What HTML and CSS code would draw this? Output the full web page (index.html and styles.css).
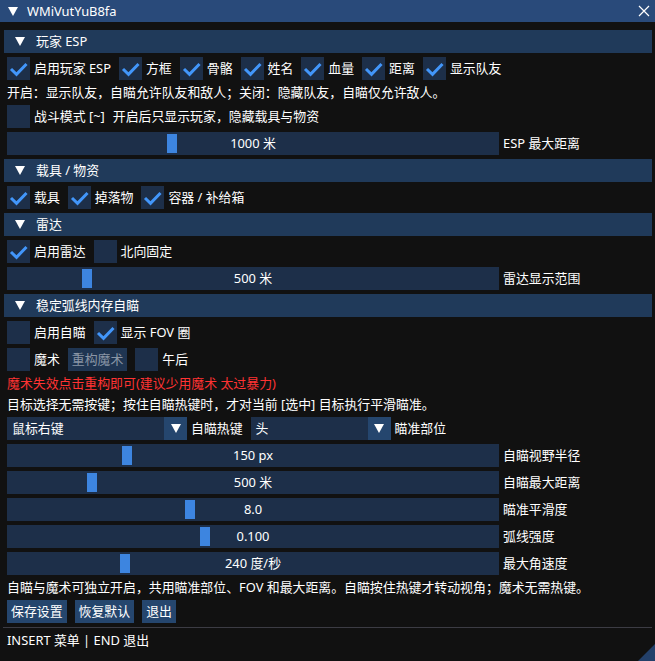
FILE: index.html
```html
<!DOCTYPE html>
<html lang="zh-CN">
<head>
<meta charset="utf-8">
<title>WMiVutYuB8fa</title>
<link rel="stylesheet" href="styles.css">
</head>
<body>
<div class="window">
  <div class="titlebar">
    <span class="tri title-tri"></span>
    <span class="title">WMiVutYuB8fa</span>
    <svg class="close" width="12" height="12" viewBox="0 0 12 12"><path d="M1 1 L11 11 M11 1 L1 11" stroke="#fff" stroke-width="1.2" fill="none"/></svg>
  </div>
  <div class="content">
    <div class="header"><span class="tri"></span><span class="htext">玩家 ESP</span></div>
    <div class="row">
      <div class="cb"><span class="box on"><svg viewBox="0 0 23 23"><path d="M4 12 L9.5 17.3 L19.5 7"/></svg></span><span class="lbl">启用玩家 ESP</span></div>
      <div class="cb"><span class="box on"><svg viewBox="0 0 23 23"><path d="M4 12 L9.5 17.3 L19.5 7"/></svg></span><span class="lbl">方框</span></div>
      <div class="cb"><span class="box on"><svg viewBox="0 0 23 23"><path d="M4 12 L9.5 17.3 L19.5 7"/></svg></span><span class="lbl">骨骼</span></div>
      <div class="cb"><span class="box on"><svg viewBox="0 0 23 23"><path d="M4 12 L9.5 17.3 L19.5 7"/></svg></span><span class="lbl">姓名</span></div>
      <div class="cb"><span class="box on"><svg viewBox="0 0 23 23"><path d="M4 12 L9.5 17.3 L19.5 7"/></svg></span><span class="lbl">血量</span></div>
      <div class="cb"><span class="box on"><svg viewBox="0 0 23 23"><path d="M4 12 L9.5 17.3 L19.5 7"/></svg></span><span class="lbl">距离</span></div>
      <div class="cb"><span class="box on"><svg viewBox="0 0 23 23"><path d="M4 12 L9.5 17.3 L19.5 7"/></svg></span><span class="lbl">显示队友</span></div>
    </div>
    <div class="text">开启：显示队友，自瞄允许队友和敌人；关闭：隐藏队友，自瞄仅允许敌人。</div>
    <div class="row">
      <div class="cb"><span class="box"></span><span class="lbl">战斗模式 [~]</span></div>
      <span class="lbl">开启后只显示玩家，隐藏载具与物资</span>
    </div>
    <div class="srow"><div class="slider"><span class="grab" style="left:160px"></span><span class="sval">1000 米</span></div><span class="lbl">ESP 最大距离</span></div>

    <div class="header"><span class="tri"></span><span class="htext">载具 / 物资</span></div>
    <div class="row">
      <div class="cb"><span class="box on"><svg viewBox="0 0 23 23"><path d="M4 12 L9.5 17.3 L19.5 7"/></svg></span><span class="lbl">载具</span></div>
      <div class="cb"><span class="box on"><svg viewBox="0 0 23 23"><path d="M4 12 L9.5 17.3 L19.5 7"/></svg></span><span class="lbl">掉落物</span></div>
      <div class="cb"><span class="box on"><svg viewBox="0 0 23 23"><path d="M4 12 L9.5 17.3 L19.5 7"/></svg></span><span class="lbl">容器 / 补给箱</span></div>
    </div>

    <div class="header"><span class="tri"></span><span class="htext">雷达</span></div>
    <div class="row">
      <div class="cb"><span class="box on"><svg viewBox="0 0 23 23"><path d="M4 12 L9.5 17.3 L19.5 7"/></svg></span><span class="lbl">启用雷达</span></div>
      <div class="cb"><span class="box"></span><span class="lbl">北向固定</span></div>
    </div>
    <div class="srow"><div class="slider"><span class="grab" style="left:75px"></span><span class="sval">500 米</span></div><span class="lbl">雷达显示范围</span></div>

    <div class="header"><span class="tri"></span><span class="htext">稳定弧线内存自瞄</span></div>
    <div class="row">
      <div class="cb"><span class="box"></span><span class="lbl">启用自瞄</span></div>
      <div class="cb"><span class="box on"><svg viewBox="0 0 23 23"><path d="M4 12 L9.5 17.3 L19.5 7"/></svg></span><span class="lbl">显示 FOV 圈</span></div>
    </div>
    <div class="row">
      <div class="cb"><span class="box"></span><span class="lbl">魔术</span></div>
      <span class="btn disabled">重构魔术</span>
      <div class="cb"><span class="box"></span><span class="lbl">午后</span></div>
    </div>
    <div class="text red">魔术失效点击重构即可(建议少用魔术 太过暴力)</div>
    <div class="text">目标选择无需按键；按住自瞄热键时，才对当前 [选中] 目标执行平滑瞄准。</div>
    <div class="crow">
      <div class="combo c1"><span class="cval">鼠标右键</span><span class="carrow"><span class="tri"></span></span></div>
      <span class="lbl">自瞄热键</span>
      <div class="combo c2"><span class="cval">头</span><span class="carrow"><span class="tri"></span></span></div>
      <span class="lbl">瞄准部位</span>
    </div>
    <div class="srow"><div class="slider"><span class="grab" style="left:115px"></span><span class="sval">150 px</span></div><span class="lbl">自瞄视野半径</span></div>
    <div class="srow"><div class="slider"><span class="grab" style="left:80px"></span><span class="sval">500 米</span></div><span class="lbl">自瞄最大距离</span></div>
    <div class="srow"><div class="slider"><span class="grab" style="left:178px"></span><span class="sval">8.0</span></div><span class="lbl">瞄准平滑度</span></div>
    <div class="srow"><div class="slider"><span class="grab" style="left:193px"></span><span class="sval">0.100</span></div><span class="lbl">弧线强度</span></div>
    <div class="srow"><div class="slider"><span class="grab" style="left:113px"></span><span class="sval">240 度/秒</span></div><span class="lbl">最大角速度</span></div>
    <div class="text">自瞄与魔术可独立开启，共用瞄准部位、FOV 和最大距离。自瞄按住热键才转动视角；魔术无需热键。</div>
    <div class="row">
      <span class="btn">保存设置</span>
      <span class="btn">恢复默认</span>
      <span class="btn">退出</span>
    </div>
    <div class="sep"></div>
    <div class="text">INSERT 菜单 | END 退出</div>
  </div>
  <div class="grip"></div>
</div>
</body>
</html>
```

FILE: styles.css
```css
html, body {
  margin: 0;
  padding: 0;
  background: #111111;
}
body {
  width: 655px;
  height: 661px;
  overflow: hidden;
  font-family: "Noto Sans", "Open Sans", "Noto Sans CJK SC", sans-serif;
  font-size: 12.9px;
  color: #ffffff;
}
.window {
  position: relative;
  width: 655px;
  height: 661px;
  background: #111111;
}
.titlebar {
  height: 22px;
  background: #294a7a;
  display: flex;
  align-items: center;
}
.tri {
  display: inline-block;
  width: 0;
  height: 0;
  border-left: 5px solid transparent;
  border-right: 5px solid transparent;
  border-top: 9px solid #ffffff;
}
.title-tri {
  margin-left: 8px;
}
.title {
  margin-left: 9px;
  line-height: 17px;
}
.close {
  margin-left: auto;
  margin-right: 5px;
}
.content {
  padding: 8px 7px 0 7px;
  display: flex;
  flex-direction: column;
  gap: 4px;
}
.header {
  height: 23px;
  margin: 0 -4px 0 -3px;
  background: #203a5a;
  display: flex;
  align-items: center;
}
.header .tri {
  margin-left: 11px;
}
.htext {
  margin-left: 11px;
  line-height: 17px;
}
.row {
  display: flex;
  align-items: center;
  gap: 8px;
  height: 23px;
}
.cb {
  display: flex;
  align-items: center;
  gap: 4px;
}
.box {
  width: 23px;
  height: 23px;
  background: #1d2f49;
  display: block;
}
.box svg {
  display: block;
  width: 23px;
  height: 23px;
}
.box svg path {
  fill: none;
  stroke: #4296fa;
  stroke-width: 3;
  stroke-linecap: butt;
  stroke-linejoin: miter;
}
.lbl {
  line-height: 17px;
  white-space: nowrap;
}
.text {
  height: 17px;
  line-height: 17px;
  white-space: nowrap;
}
.text.red {
  color: #ff3333;
}
.srow {
  display: flex;
  align-items: center;
  gap: 4px;
  height: 23px;
}
.slider {
  position: relative;
  width: 492px;
  height: 23px;
  background: #1d2f49;
  display: flex;
  align-items: center;
  justify-content: center;
}
.grab {
  position: absolute;
  top: 2px;
  width: 10px;
  height: 19px;
  background: #3d85e0;
}
.sval {
  position: relative;
  line-height: 17px;
}
.btn {
  height: 23px;
  padding: 0 4px;
  background: #25466e;
  display: flex;
  align-items: center;
  line-height: 17px;
}
.btn.disabled {
  background: #1f3552;
  color: #8a95a6;
}
.crow {
  display: flex;
  align-items: center;
  height: 23px;
}
.combo {
  height: 23px;
  background: #1d2f49;
  display: flex;
  align-items: center;
}
.c1 {
  width: 180px;
  margin-right: 4px;
}
.c2 {
  width: 140px;
  margin-left: 8px;
  margin-right: 4px;
}
.cval {
  flex: 1;
  padding-left: 5px;
  line-height: 17px;
}
.carrow {
  width: 23px;
  height: 23px;
  background: #25466e;
  display: flex;
  align-items: center;
  justify-content: center;
}
.sep {
  height: 1px;
  margin: 0 -4px 0 -4px;
  background: #3c3c44;
}
.grip {
  position: absolute;
  right: 0;
  bottom: 0;
  width: 0;
  height: 0;
  border-left: 17px solid transparent;
  border-bottom: 17px solid #23406a;
}
```
